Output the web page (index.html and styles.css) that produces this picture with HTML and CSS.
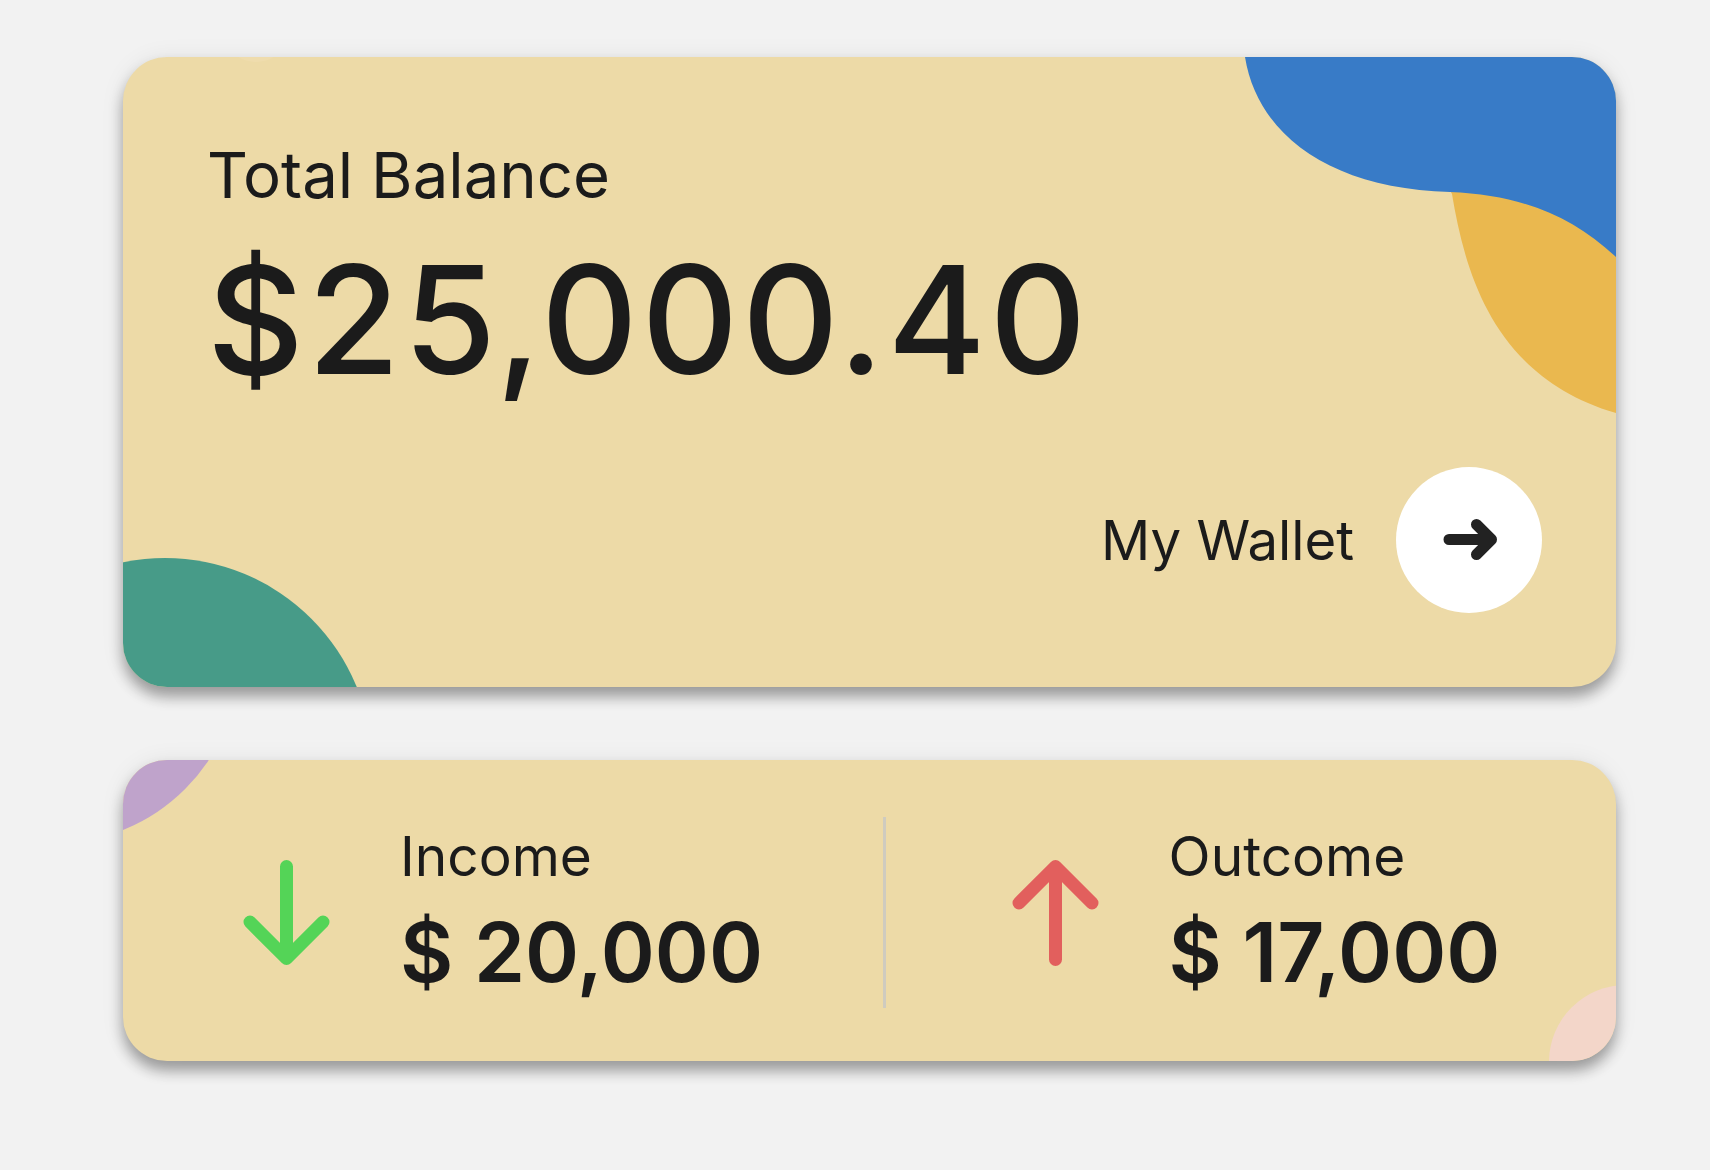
FILE: index.html
```html
<!DOCTYPE html>
<html lang="en">
<head>
<meta charset="utf-8">
<title>Balance</title>
<link rel="stylesheet" href="styles.css">
</head>
<body>
<main class="page">
  <section class="card balance-card">
    <svg class="card-bg" viewBox="0 0 1493 630" preserveAspectRatio="none" aria-hidden="true">
      <ellipse cx="133" cy="-14" rx="26" ry="19" fill="#efdcad"/>
      <path d="M1310,100 L1329,137 C1342,215 1370,320 1493,356 L1493,100 Z" fill="#eab84f"/>
      <path d="M1122,0 C1135,80 1210,132 1327,135 C1400,138 1450,160 1493,200 L1493,0 Z" fill="#387bc7"/>
      <circle cx="42" cy="708" r="207" fill="#479b88"/>
    </svg>
    <div class="card-content">
      <h2 class="title">Total Balance</h2>
      <p class="amount">$25,000.40</p>
      <div class="wallet-row">
        <span class="wallet-label">My Wallet</span>
        <button class="wallet-btn" type="button" aria-label="Open wallet">
          <svg viewBox="0 0 146 146" width="146" height="146">
            <path d="M53 72.5 H95.5 M80.5 57.5 L95.5 72.5 L80.5 87.5" fill="none" stroke="#222222" stroke-width="11" stroke-linecap="round" stroke-linejoin="round"/>
          </svg>
        </button>
      </div>
    </div>
  </section>

  <section class="card flow-card">
    <svg class="card-bg" viewBox="0 0 1493 301" preserveAspectRatio="none" aria-hidden="true">
      <circle cx="-68" cy="-101" r="184" fill="#bfa3cb"/>
      <circle cx="1503" cy="302" r="77" fill="#f3d6c9"/>
    </svg>
    <div class="flow-content">
      <div class="stat">
        <svg class="stat-icon" viewBox="0 0 87 106" width="87" height="106">
          <path d="M43.5 6.5 V98.5 M7 62 L43.5 98.5 L80 62" fill="none" stroke="#54d457" stroke-width="13" stroke-linecap="round" stroke-linejoin="round"/>
        </svg>
        <div class="stat-text">
          <span class="stat-label">Income</span>
          <span class="stat-value">$ 20,000</span>
        </div>
      </div>
      <div class="divider"></div>
      <div class="stat stat-out">
        <svg class="stat-icon" viewBox="0 0 87 106" width="87" height="106">
          <path d="M43.5 99.5 V6.5 M7 43 L43.5 6.5 L80 43" fill="none" stroke="#e25f5d" stroke-width="13" stroke-linecap="round" stroke-linejoin="round"/>
        </svg>
        <div class="stat-text">
          <span class="stat-label">Outcome</span>
          <span class="stat-value">$ 17,000</span>
        </div>
      </div>
    </div>
  </section>
</main>
</body>
</html>
```

FILE: styles.css
```css
* {
  box-sizing: border-box;
}

html, body {
  margin: 0;
  padding: 0;
}

body {
  background: #f2f2f2;
  font-family: Inter, "Noto Sans", "Liberation Sans", sans-serif;
  color: #1b1b1b;
}

.page {
  padding: 57px 94px 60px 123px;
  display: flex;
  flex-direction: column;
  gap: 73px;
}

.card {
  position: relative;
  overflow: hidden;
  background: #eddaa7;
  border-radius: 44px;
  box-shadow: 0 10px 14px rgba(0, 0, 0, 0.33), 0 2px 24px rgba(0, 0, 0, 0.08);
}

.card-bg {
  position: absolute;
  inset: 0;
  width: 100%;
  height: 100%;
  display: block;
}

.balance-card {
  height: 630px;
}

.card-content {
  position: relative;
  height: 100%;
  padding: 86px 74px 74px 84px;
  display: flex;
  flex-direction: column;
}

.title {
  margin: 0;
  font-size: 63.5px;
  line-height: 1;
  font-weight: 400;
}

.amount {
  margin: 38px 0 0;
  font-size: 150px;
  line-height: 1;
  font-weight: 500;
  letter-spacing: 3.6px;
}

.wallet-row {
  margin-top: auto;
  display: flex;
  justify-content: flex-end;
  align-items: center;
  gap: 42px;
}

.wallet-label {
  font-size: 54.5px;
  line-height: 1;
  font-weight: 400;
}

.wallet-btn {
  width: 146px;
  height: 146px;
  border: none;
  padding: 0;
  border-radius: 50%;
  background: #ffffff;
  display: flex;
  align-items: center;
  justify-content: center;
}

.wallet-btn svg {
  display: block;
}

.flow-card {
  height: 301px;
}

.flow-content {
  position: relative;
  height: 100%;
  display: grid;
  grid-template-columns: 760px 3px 1fr;
  align-items: center;
}

.stat {
  display: flex;
  justify-content: center;
  align-items: center;
  gap: 70px;
}

.stat-out {
  padding-left: 10px;
}

.stat-icon {
  display: block;
  flex: none;
  margin-top: 5px;
}

.stat-text {
  display: flex;
  flex-direction: column;
  margin-top: 2px;
}

.stat-label {
  font-size: 55px;
  line-height: 1;
  font-weight: 400;
}

.stat-value {
  margin-top: 28px;
  font-size: 82px;
  line-height: 1;
  font-weight: 600;
}

.divider {
  width: 3px;
  height: 191px;
  background: #cfcbbf;
  margin-top: 4px;
}
```
